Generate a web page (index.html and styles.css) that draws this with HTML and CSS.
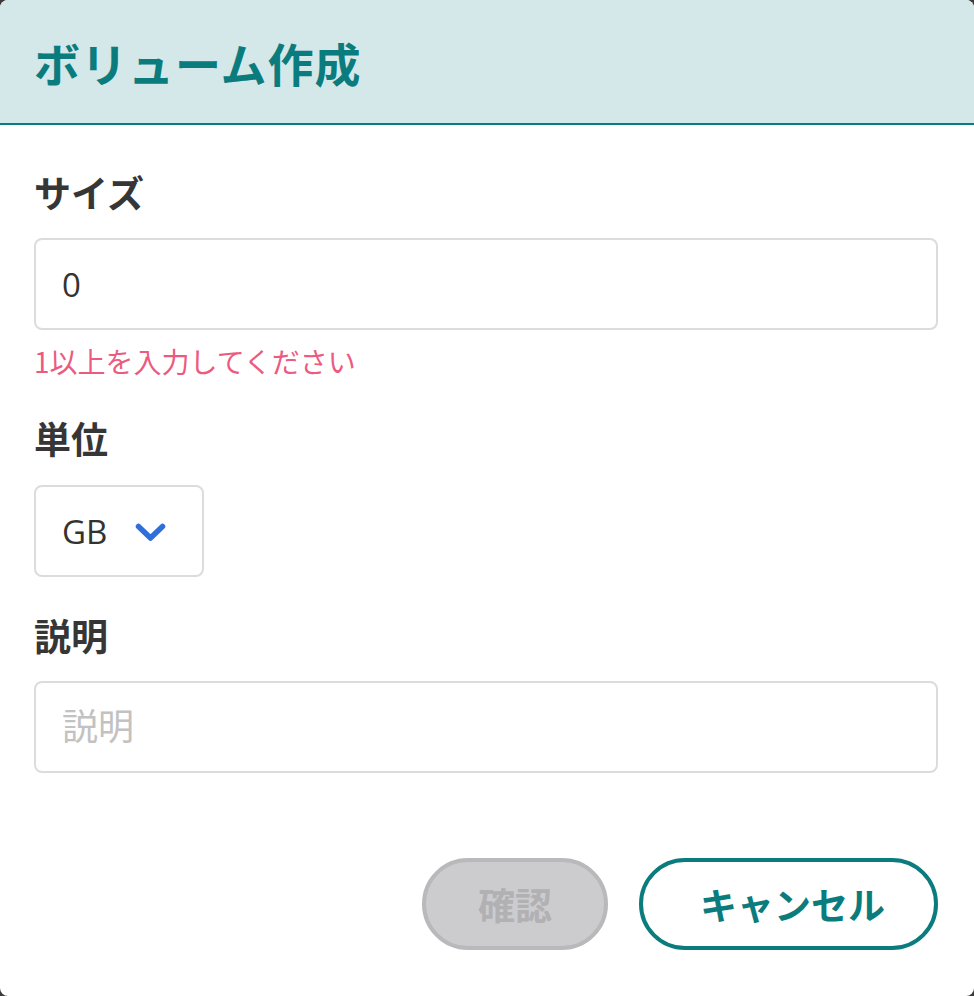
FILE: index.html
```html
<!DOCTYPE html>
<html lang="ja">
<head>
<meta charset="utf-8">
<title>ボリューム作成</title>
<link rel="stylesheet" href="styles.css">
</head>
<body>
<div class="dialog">
  <header class="dialog-header">
    <h1 class="dialog-title">ボリューム作成</h1>
  </header>
  <div class="dialog-body">
    <label class="field-label field-label--first">サイズ</label>
    <input class="text-input" type="text" value="0">
    <div class="error-text">1以上を入力してください</div>

    <label class="field-label field-label--mid">単位</label>
    <div class="select-box">
      <span class="select-value">GB</span>
      <svg class="chevron" width="31" height="19" viewBox="0 0 31 19" aria-hidden="true">
        <polyline points="3.5,3.5 15.5,15 27.5,3.5" fill="none" stroke="#2f6fdc" stroke-width="5.5" stroke-linecap="round" stroke-linejoin="round"/>
      </svg>
    </div>

    <label class="field-label field-label--mid2">説明</label>
    <input class="text-input" type="text" placeholder="説明">

    <div class="actions">
      <button class="btn btn-confirm" disabled>確認</button>
      <button class="btn btn-cancel">キャンセル</button>
    </div>
  </div>
</div>
</body>
</html>
```

FILE: styles.css
```css
html, body {
  margin: 0;
  padding: 0;
  background: #3a3a3a;
}

body {
  width: 974px;
  height: 996px;
  overflow: hidden;
  font-family: "Noto Sans CJK JP", "Noto Sans", sans-serif;
}

.dialog {
  width: 974px;
  height: 996px;
  background: #ffffff;
  border-radius: 8px;
  overflow: hidden;
  display: flex;
  flex-direction: column;
}

.dialog-header {
  height: 123px;
  background: #d4e7e9;
  border-bottom: 2px solid #0a7e7e;
  display: flex;
  align-items: center;
  padding: 0 34px;
  flex-shrink: 0;
}

.dialog-title {
  margin: 0;
  font-size: 46px;
  font-weight: 700;
  color: #0b7c7d;
  line-height: 1;
  letter-spacing: 1px;
}

.dialog-body {
  display: flex;
  flex-direction: column;
  padding: 0 36px 0 34px;
}

.field-label {
  display: block;
  font-size: 37px;
  font-weight: 700;
  color: #363636;
  line-height: 50px;
  height: 50px;
}

.field-label--first {
  margin-top: 42px;
  margin-bottom: 21px;
}

.field-label--mid {
  margin-top: 32px;
  margin-bottom: 22px;
}

.field-label--mid2 {
  margin-top: 33px;
  margin-bottom: 21px;
}

.text-input {
  box-sizing: border-box;
  width: 904px;
  height: 92px;
  border: 2px solid #dcdcdc;
  border-radius: 8px;
  padding: 0 26px;
  font-family: "Open Sans", "Noto Sans CJK JP", sans-serif;
  font-size: 33px;
  color: #333333;
  background: #ffffff;
  outline: none;
  margin: 0;
}

.text-input::placeholder {
  color: #c2c2c2;
  font-family: "Noto Sans CJK JP", sans-serif;
  font-size: 36px;
}

.error-text {
  margin-top: 11px;
  font-size: 28px;
  line-height: 40px;
  height: 40px;
  color: #ec5b7f;
}

.select-box {
  box-sizing: border-box;
  width: 170px;
  height: 92px;
  border: 2px solid #dcdcdc;
  border-radius: 8px;
  display: flex;
  align-items: center;
  padding: 0 0 0 26px;
  gap: 28px;
}

.select-value {
  font-family: "Open Sans", sans-serif;
  font-size: 33px;
  color: #333333;
}

.chevron {
  display: block;
  margin-top: 2px;
}

.actions {
  margin-top: 85px;
  display: flex;
  justify-content: flex-end;
  gap: 31px;
}

.btn {
  box-sizing: border-box;
  height: 92px;
  border-radius: 46px;
  font-family: "Noto Sans CJK JP", sans-serif;
  font-size: 37px;
  font-weight: 700;
  padding: 0;
  margin: 0;
  display: flex;
  align-items: center;
  justify-content: center;
}

.btn-confirm {
  width: 186px;
  background: #cccccf;
  border: 4px solid #b9b9bc;
  color: #b1b1b4;
}

.btn-cancel {
  width: 299px;
  background: #ffffff;
  border: 4px solid #0b7c7d;
  color: #0b7c7d;
  padding-left: 8px;
}
```
